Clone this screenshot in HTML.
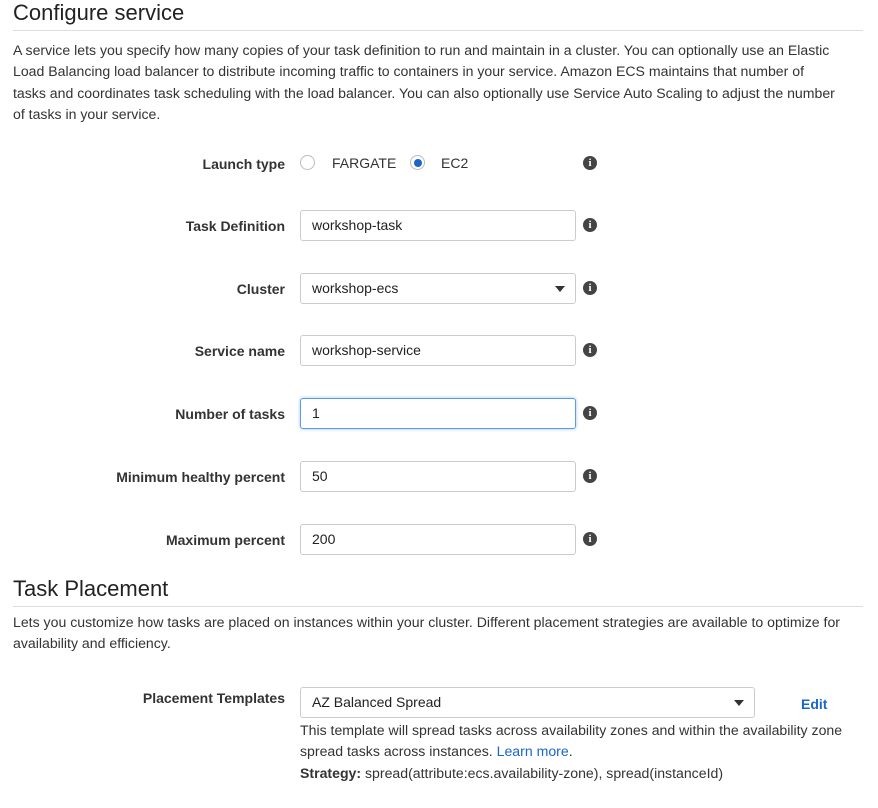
<!DOCTYPE html>
<html><head><style>
body{margin:0;width:878px;height:808px;background:#fff;font-family:"Liberation Sans",Arial,sans-serif;color:#222;position:relative;overflow:hidden}
.a{position:absolute;white-space:nowrap}
h1{position:absolute;margin:0;font-weight:normal;font-size:22px;color:#222}
.hr{position:absolute;left:13px;width:850px;height:1px;background:#ddd}
.p{position:absolute;left:13px;font-size:14.1px;line-height:21.3px;color:#333;width:870px;white-space:nowrap}
.lbl{position:absolute;right:593px;font-size:14px;font-weight:bold;color:#333;white-space:nowrap}
.in{position:absolute;left:300px;width:276px;height:31px;border:1px solid #ccc;border-radius:3px;box-sizing:border-box;font-size:14px;line-height:29px;padding-left:11px;color:#222}
.info{position:absolute;left:583px;width:14px;height:14px;border-radius:50%;background:#444;color:#fff;font:bold 11px "Liberation Serif",serif;text-align:center;line-height:14px}
.car{position:absolute;right:10px;top:12px;width:0;height:0;border-left:5px solid transparent;border-right:5px solid transparent;border-top:6px solid #333}
</style></head><body>
<h1 style="left:13px;top:0px">Configure service</h1>
<div class="hr" style="top:30px"></div>
<div class="p" style="top:40px">A service lets you specify how many copies of your task definition to run and maintain in a cluster. You can optionally use an Elastic<br>Load Balancing load balancer to distribute incoming traffic to containers in your service. Amazon ECS maintains that number of<br>tasks and coordinates task scheduling with the load balancer. You can also optionally use Service Auto Scaling to adjust the number<br>of tasks in your service.</div>

<div class="lbl" style="top:156px">Launch type</div>
<div class="a" style="left:300px;top:155px;width:15px;height:15px;border:1px solid #bbb;border-radius:50%;box-sizing:border-box"></div>
<div class="a" style="left:332px;top:155px;font-size:14px;color:#333">FARGATE</div>
<div class="a" style="left:410px;top:155px;width:15px;height:15px;border:1px solid #bbb;border-radius:50%;box-sizing:border-box"><div style="margin:2.5px;width:8px;height:8px;border-radius:50%;background:#1a66c9"></div></div>
<div class="a" style="left:441px;top:155px;font-size:14px;color:#333">EC2</div>
<div class="info" style="top:156px">i</div>

<div class="lbl" style="top:218px">Task Definition</div>
<div class="in" style="top:210px">workshop-task</div>
<div class="info" style="top:218px">i</div>

<div class="lbl" style="top:281px">Cluster</div>
<div class="in" style="top:273px">workshop-ecs<div class="car"></div></div>
<div class="info" style="top:281px">i</div>

<div class="lbl" style="top:343px">Service name</div>
<div class="in" style="top:335px">workshop-service</div>
<div class="info" style="top:343px">i</div>

<div class="lbl" style="top:406px">Number of tasks</div>
<div class="in" style="top:398px;border-color:#5b9ddf;box-shadow:0 0 3px #9cc4ee">1</div>
<div class="info" style="top:406px">i</div>

<div class="lbl" style="top:469px">Minimum healthy percent</div>
<div class="in" style="top:461px">50</div>
<div class="info" style="top:469px">i</div>

<div class="lbl" style="top:532px">Maximum percent</div>
<div class="in" style="top:524px">200</div>
<div class="info" style="top:532px">i</div>

<h1 style="left:13px;top:576px;font-size:22px">Task Placement</h1>
<div class="hr" style="top:606px"></div>
<div class="p" style="top:612px">Lets you customize how tasks are placed on instances within your cluster. Different placement strategies are available to optimize for<br>availability and efficiency.</div>

<div class="lbl" style="top:690px">Placement Templates</div>
<div class="in" style="top:687px;width:455px;height:31px">AZ Balanced Spread<div class="car"></div></div>
<div class="a" style="left:801px;top:696px;font-size:14px;font-weight:bold;color:#1a66c9">Edit</div>
<div class="p" style="left:300px;top:720px;width:570px">This template will spread tasks across availability zones and within the availability zone<br>spread tasks across instances. <span style="color:#1a66c9">Learn more</span>.<br><b>Strategy:</b> spread(attribute:ecs.availability-zone), spread(instanceId)</div>
</body></html>
